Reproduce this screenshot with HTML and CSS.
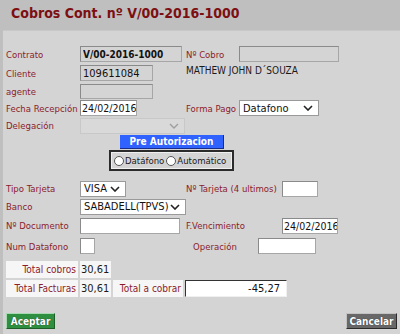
FILE: index.html
```html
<!DOCTYPE html>
<html lang="es">
<head>
    <meta charset="UTF-8">
    <title>Cobros Cont.</title>
    <link rel="stylesheet" href="styles.css">
</head>
<body>
    <h1 class="titulo">Cobros Cont. nº V/00-2016-1000</h1>
    <div class="panel">
        <div class="fila f1">
            <div class="izq">
                <label class="lbl">Contrato</label>
                <input class="campo gris negrita w102" type="text" value="V/00-2016-1000" readonly>
            </div>
            <label class="lbl lw53">Nº Cobro</label>
            <input class="campo gris w100" type="text" readonly>
        </div>
        <div class="fila f2">
            <div class="izq">
                <label class="lbl">Cliente</label>
                <input class="campo gris w73" type="text" value="109611084" readonly>
            </div>
            <span class="nombre">MATHEW JOHN D´SOUZA</span>
        </div>
        <div class="fila f3">
            <div class="izq">
                <label class="lbl">agente</label>
                <input class="campo gris w73 h15" type="text" readonly>
            </div>
        </div>
        <div class="fila f4">
            <div class="izq">
                <label class="lbl">Fecha Recepción</label>
                <input class="campo blanco fecha w57" type="text" value="24/02/2016">
            </div>
            <label class="lbl lw53">Forma Pago</label>
            <select class="sel w80"><option>Datafono</option></select>
        </div>
        <div class="fila f5">
            <div class="izq">
                <label class="lbl">Delegación</label>
                <select class="sel desact w105" disabled><option></option></select>
            </div>
        </div>

        <div class="preaut">Pre Autorizacion</div>
        <div class="radios">
            <label><span class="radio"></span>Datáfono</label>
            <label><span class="radio"></span>Automático</label>
        </div>

        <div class="fila f6">
            <div class="izq">
                <label class="lbl">Tipo Tarjeta</label>
                <select class="sel w46"><option>VISA</option></select>
            </div>
            <label class="lbl lw96">Nº Tarjeta (4 ultimos)</label>
            <input class="campo blanco w36" type="text">
        </div>
        <div class="fila f7">
            <div class="izq">
                <label class="lbl">Banco</label>
                <select class="sel w106"><option>SABADELL(TPVS)</option></select>
            </div>
        </div>
        <div class="fila f8">
            <div class="izq">
                <label class="lbl">Nº Documento</label>
                <input class="campo blanco w100" type="text">
            </div>
            <label class="lbl lw96">F.Vencimiento</label>
            <input class="campo blanco fecha w56" type="text" value="24/02/2016">
        </div>
        <div class="fila f9">
            <div class="izq">
                <label class="lbl">Num Datafono</label>
                <input class="campo blanco w15 h16" type="text">
            </div>
            <label class="lbl lw72 ind7">Operación</label>
            <input class="campo blanco w58" type="text">
        </div>

        <table class="totales">
            <tr>
                <td class="tl w72">Total cobros</td>
                <td class="tv">30,61</td>
            </tr>
            <tr>
                <td class="tl">Total Facturas</td>
                <td class="tv">30,61</td>
                <td class="tl w70">Total a cobrar</td>
                <td class="ti"><input class="campo blanco total" type="text" value="-45,27"></td>
            </tr>
        </table>

        <div class="botones">
            <button class="btn aceptar">Aceptar</button>
            <button class="btn cancelar">Cancelar</button>
        </div>
    </div>
</body>
</html>
```

FILE: styles.css
```css
html, body {
    margin: 0;
    height: 100%;
}
body {
    background-color: #bfbfbf;
    font-family: "DejaVu Sans Condensed", "DejaVu Sans", sans-serif;
    font-size: 10px;
    color: #1a1a1a;
    overflow: hidden;
}
.titulo {
    margin: 0;
    padding: 5px 0 0 11px;
    height: 30px;
    box-sizing: border-box;
    font-size: 14px;
    font-weight: bold;
    color: #7d0f12;
}
.panel {
    margin-left: 3px;
    background-color: #d4d4d4;
    height: 304px;
    padding: 15px 0 0 3px;
    box-sizing: border-box;
    border-top: 1px solid #c8c8c8;
}
.fila {
    display: flex;
    align-items: center;
    height: 16px;
}
.f2 { margin-top: 3px; }
.f3 { margin-top: 3px; height: 15px; }
.f4 { margin-top: 1px; }
.f5 { margin-top: 2px; height: 15px; }
.f6 { margin-top: 10px; height: 15px; }
.f7 { margin-top: 3px; height: 15px; }
.f8 { margin-top: 4px; height: 15px; }
.f9 { margin-top: 5px; height: 16px; }
.izq {
    display: flex;
    align-items: center;
    width: 180px;
}
.lbl {
    width: 74px;
    flex-shrink: 0;
    color: #8b1c2c;
    font-size: 9.5px;
    white-space: nowrap;
}
.lw53 { width: 53px; }
.lw96 { width: 96px; }
.lw72 { width: 72px; }
.ind7 { padding-left: 7px; box-sizing: border-box; }
.nombre {
    margin-top: -6px;
    font-size: 10px;
}
.campo {
    height: 16px;
    box-sizing: border-box;
    border: 1px solid #a6a6a6;
    border-top-color: #8a8a8a;
    border-left-color: #8a8a8a;
    padding: 0 2px;
    font-family: inherit;
    font-size: 11px;
    color: #111;
    outline: none;
}
.fecha {
    padding: 0 0 0 1px;
    font-size: 10.5px;
}
.gris { background-color: #d4d4d4; }
.blanco { background-color: #fff; }
.negrita { font-weight: bold; font-size: 10px; }
.h15 { height: 15px; }
.h16 { height: 16px; }
.w102 { width: 102px; }
.w100 { width: 100px; }
.w73 { width: 73px; }
.w57 { width: 57px; }
.w56 { width: 56px; }
.w58 { width: 58px; }
.w36 { width: 36px; }
.w15 { width: 15px; }
.sel {
    -webkit-appearance: none;
    appearance: none;
    height: 16px;
    box-sizing: border-box;
    border: 1px solid #9a9a9a;
    background-color: #fff;
    background-image: url("data:image/svg+xml,%3Csvg xmlns='http://www.w3.org/2000/svg' width='10' height='6'%3E%3Cpath d='M1 1l4 4 4-4' fill='none' stroke='%23222' stroke-width='1.6'/%3E%3C/svg%3E");
    background-repeat: no-repeat;
    background-position: right 5px center;
    padding: 0 0 0 3px;
    font-family: inherit;
    font-size: 11px;
    color: #111;
    border-radius: 0;
}
.desact {
    background-color: #dcdcdc;
    border-color: #c4c4c4;
    background-image: url("data:image/svg+xml,%3Csvg xmlns='http://www.w3.org/2000/svg' width='10' height='6'%3E%3Cpath d='M1 1l4 4 4-4' fill='none' stroke='%23888' stroke-width='1.4'/%3E%3C/svg%3E");
}
.w80 { width: 80px; }
.w105 { width: 105px; }
.w46 { width: 46px; }
.w106 { width: 106px; }
.preaut {
    margin: 2px 0 0 114px;
    width: 104px;
    height: 14px;
    box-sizing: border-box;
    background-color: #2f62ff;
    border-right: 1px solid #1a2c8a;
    border-bottom: 1px solid #1a2c8a;
    color: #fff;
    font-weight: bold;
    font-size: 10px;
    text-align: center;
    line-height: 13px;
}
.radios {
    margin: 1px 0 0 103px;
    width: 125px;
    height: 21px;
    box-sizing: border-box;
    border: 2px solid #2b2b2b;
    outline: 1px solid #f0f0f0;
    outline-offset: -3px;
    display: flex;
    align-items: center;
    padding-left: 3px;
    gap: 2px;
    font-size: 9.5px;
}
.radios label {
    display: flex;
    align-items: center;
}
.radio {
    width: 10px;
    height: 10px;
    border-radius: 50%;
    border: 1px solid #555;
    background-color: #fff;
    margin-right: 1px;
    box-sizing: border-box;
}
.totales {
    margin-top: 5px;
    border-collapse: separate;
    border-spacing: 0 2px;
    margin-left: 0;
}
.totales td {
    height: 17px;
    padding: 0;
    font-size: 10px;
}
.tl {
    background-color: #f6f6f6;
    color: #8b1c2c;
    text-align: right;
    padding-right: 2px !important;
    border-right: 2px solid #d4d4d4;
    box-sizing: border-box;
}
.w72 { width: 74px; }
.w70 { width: 72px; }
.tv {
    background-color: #f6f6f6;
    width: 30px;
    border-right: 2px solid #d4d4d4;
    padding-left: 1px !important;
    font-size: 11px !important;
}
.total {
    width: 102px;
    height: 17px;
    text-align: right;
    font-size: 11px;
    padding-right: 6px;
    border: 1px solid #333;
    border-bottom-color: #f0f0f0;
    border-right-color: #f0f0f0;
}
.botones {
    display: flex;
    justify-content: space-between;
    margin-top: 14px;
    padding-right: 3px;
}
.btn {
    height: 16px;
    padding: 0;
    font-family: inherit;
    font-size: 10px;
    font-weight: bold;
    color: #fff;
    cursor: pointer;
    text-shadow: 0 0 1px #222;
}
.aceptar {
    width: 49px;
    background-color: #2f8f41;
    border: 1px solid #1f5e29;
    border-top-color: #a8d8b0;
    border-left-color: #a8d8b0;
}
.cancelar {
    width: 51px;
    background-color: #686868;
    border: 1px solid #2b2b2b;
    border-top-color: #c2c2c2;
    border-left-color: #c2c2c2;
}
```
